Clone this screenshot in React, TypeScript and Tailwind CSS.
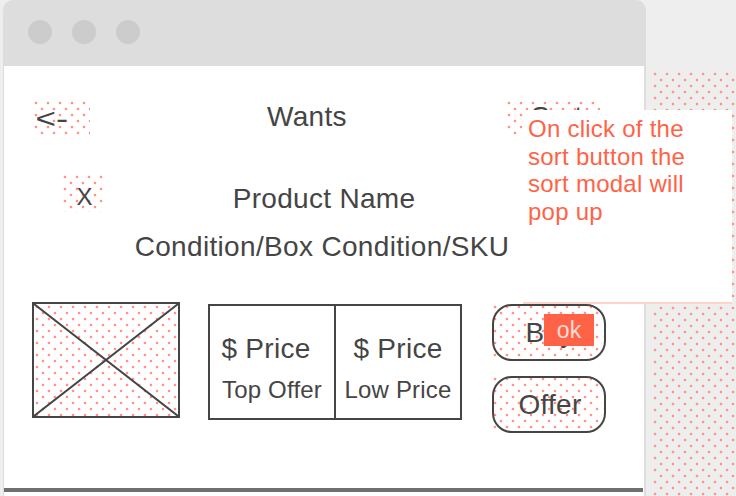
import React from "react";

const dots =
  "bg-[image:radial-gradient(circle_at_3px_3px,#ff9384_1px,transparent_1.7px),radial-gradient(circle_at_9px_9px,#ff9384_1px,transparent_1.7px)] bg-[length:12px_12px]";

function PillButton({ label, children }: { label: string; children?: React.ReactNode }) {
  return (
    <div className="relative grid w-[114px] h-[57px]">
      <div className={`[grid-area:1/1] w-[110px] h-[53px] ${dots}`} />
      <div className="[grid-area:1/1] rounded-[20px] border-2 border-[#454545] flex items-center justify-center pl-[2px] text-[28px] leading-[32px] tracking-[0.3px] text-[#454545]">
        {label}
      </div>
      {children}
    </div>
  );
}

export default function App() {
  return (
    <div
      className="relative w-[736px] h-[496px] flex bg-[#eeeeee] overflow-hidden"
      style={{ fontFamily: '"Liberation Sans", Arial, sans-serif' }}
    >
      {/* window */}
      <div className="ml-[3px] w-[643px] h-full flex flex-col bg-[#dddddd] rounded-t-[10px]">
        <div className="h-[66px] flex gap-[20px] pl-[25px] pt-[20px]">
          <div className="w-[24px] h-[24px] rounded-full bg-[#cccccc]" />
          <div className="w-[24px] h-[24px] rounded-full bg-[#cccccc]" />
          <div className="w-[24px] h-[24px] rounded-full bg-[#cccccc]" />
        </div>
        <div className="ml-[1px] mr-[2px] h-[430px] bg-white flex flex-col text-[#454545]">
          {/* header row */}
          <div className="mt-[34px] flex items-start h-[37px]">
            <div className={`ml-[29px] w-[57px] h-[37px] ${dots}`}>
              <div className="pl-[2px] pt-[3px] text-[28px] leading-[32px] origin-left scale-x-[1.25]">&lt;-</div>
            </div>
            <div className="ml-[177px] mt-[1px] text-[28px] leading-[32px] tracking-[0.3px]">Wants</div>
            <div className={`ml-auto mr-[44px] w-[94px] h-[36px] ${dots}`}>
              <div className="pl-[25px] pt-[1px] text-[28px] leading-[32px]">Sort</div>
            </div>
          </div>

          {/* product info */}
          <div className="mt-[37px] grid">
            <div className={`[grid-area:1/1] justify-self-start ml-[58px] w-[41px] h-[38px] ${dots}`}>
              <div className="pt-[9px] pl-[4px] text-center text-[24px] leading-[28px]">X</div>
            </div>
            <div className="[grid-area:1/1] justify-self-center flex flex-col items-center">
              <div className="mt-[9px] text-[28px] leading-[32px] tracking-[0.3px]">Product Name</div>
              <div className="mt-[16px] mr-[4px] text-[28px] leading-[32px] tracking-[0.33px]">
                Condition/Box Condition/SKU
              </div>
            </div>
          </div>

          {/* product row */}
          <div className="mt-[39px] flex items-start">
            <div className={`ml-[28px] w-[148px] h-[116px] border-2 border-[#454545] ${dots}`}>
              <svg width="144" height="112" viewBox="0 0 144 112" className="block">
                <line x1="0" y1="0" x2="144" y2="112" stroke="#454545" strokeWidth="2" />
                <line x1="144" y1="0" x2="0" y2="112" stroke="#454545" strokeWidth="2" />
              </svg>
            </div>
            <div className="ml-[28px] mt-[2px] w-[254px] h-[116px] border-2 border-[#454545] flex">
              <div className="w-[126px] border-r-2 border-[#454545] flex flex-col items-center pt-[27px]">
                <div className="mr-[12px] text-[28px] leading-[32px] tracking-[0.3px]">$ Price</div>
                <div className="mt-[11px] text-[24px] leading-[28px] tracking-[0.2px]">Top Offer</div>
              </div>
              <div className="flex-1 flex flex-col items-center pt-[27px]">
                <div className="text-[28px] leading-[32px] tracking-[0.3px]">$ Price</div>
                <div className="mt-[11px] text-[24px] leading-[28px] tracking-[0.2px]">Low Price</div>
              </div>
            </div>
            <div className="ml-[30px] mt-[2px] flex flex-col gap-[15px]">
              <PillButton label="Buy">
                <div className="absolute left-[52px] top-[10px] w-[50px] h-[32px] bg-[#ff6347] flex items-center justify-center text-[23px] leading-[26px] text-[#ffdcd5]">
                  ok
                </div>
              </PillButton>
              <PillButton label="Offer" />
            </div>
          </div>

          <div className="mt-auto h-[4px] mr-[1px] bg-[#707070]" />
          <div className="h-[4px]" />
        </div>
      </div>

      {/* right backdrop */}
      <div className="flex-1 pl-[6px] pt-[71px] flex">
        <div className={`flex-1 ${dots}`} />
      </div>

      {/* annotation note */}
      <div className="absolute left-[523px] top-[110px] w-[209px] h-[194px] bg-white border-b-2 border-[#ffd2ca] pt-[5px] pl-[5px] text-[24px] leading-[1.15] tracking-[0.25px] text-[#ff6347]">
        On click of the
        <br />
        sort button the
        <br />
        sort modal will
        <br />
        pop up
      </div>
    </div>
  );
}
